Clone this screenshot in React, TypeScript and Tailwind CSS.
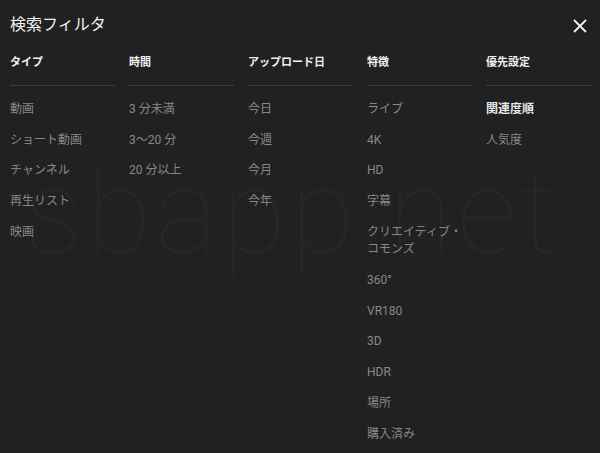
import React from "react";

const columns: { title: string; items: { label: string; active?: boolean }[] }[] = [
  { title: "タイプ", items: [{ label: "動画" }, { label: "ショート動画" }, { label: "チャンネル" }, { label: "再生リスト" }, { label: "映画" }] },
  { title: "時間", items: [{ label: "3 分未満" }, { label: "3〜20 分" }, { label: "20 分以上" }] },
  { title: "アップロード日", items: [{ label: "今日" }, { label: "今週" }, { label: "今月" }, { label: "今年" }] },
  {
    title: "特徴",
    items: [
      { label: "ライブ" },
      { label: "4K" },
      { label: "HD" },
      { label: "字幕" },
      { label: "クリエイティブ・コモンズ" },
      { label: "360°" },
      { label: "VR180" },
      { label: "3D" },
      { label: "HDR" },
      { label: "場所" },
      { label: "購入済み" },
    ],
  },
  { title: "優先設定", items: [{ label: "関連度順", active: true }, { label: "人気度" }] },
];

export default function App() {
  return (
    <div
      className="relative w-[600px] h-[453px] overflow-hidden bg-[#212121] text-[#f1f1f1]"
      style={{ fontFamily: 'Roboto, "Noto Sans CJK JP", sans-serif' }}
    >
      <div
        aria-hidden="true"
        className="absolute left-[24px] top-[154px] pointer-events-none select-none text-[118px] leading-none font-thin tracking-[4px] text-[#262626]"
      >
        sbapp.net
      </div>
      <div className="relative pt-[2px]">
        <div className="flex items-center justify-between pl-[10px] pr-[12px] h-[46px]">
          <div className="text-[16px] leading-[20px] text-[#f1f1f1]">検索フィルタ</div>
          <svg width="16" height="16" viewBox="0 0 16 16" className="mt-[1px]">
            <path d="M2 2 L14 14 M14 2 L2 14" stroke="#f1f1f1" strokeWidth="1.8" />
          </svg>
        </div>
        <div className="flex gap-[14px] px-[10px]">
          {columns.map((col) => (
            <div key={col.title} className="w-[105px] shrink-0">
              <div className="text-[11px] font-bold leading-[14px] pt-[8px] pb-[15px] text-[#f1f1f1]">{col.title}</div>
              <div className="h-[1px] bg-[#3d3d3d]" />
              <div className="pt-[8px]">
                {col.items.map((it) => (
                  <div
                    key={it.label}
                    className={
                      it.active
                        ? "text-[12px] leading-[17px] py-[6.9px] font-bold text-[#e8e8e8]"
                        : "text-[12px] leading-[17px] py-[6.9px] text-[#888888]"
                    }
                  >
                    {it.label}
                  </div>
                ))}
              </div>
            </div>
          ))}
        </div>
      </div>
    </div>
  );
}
